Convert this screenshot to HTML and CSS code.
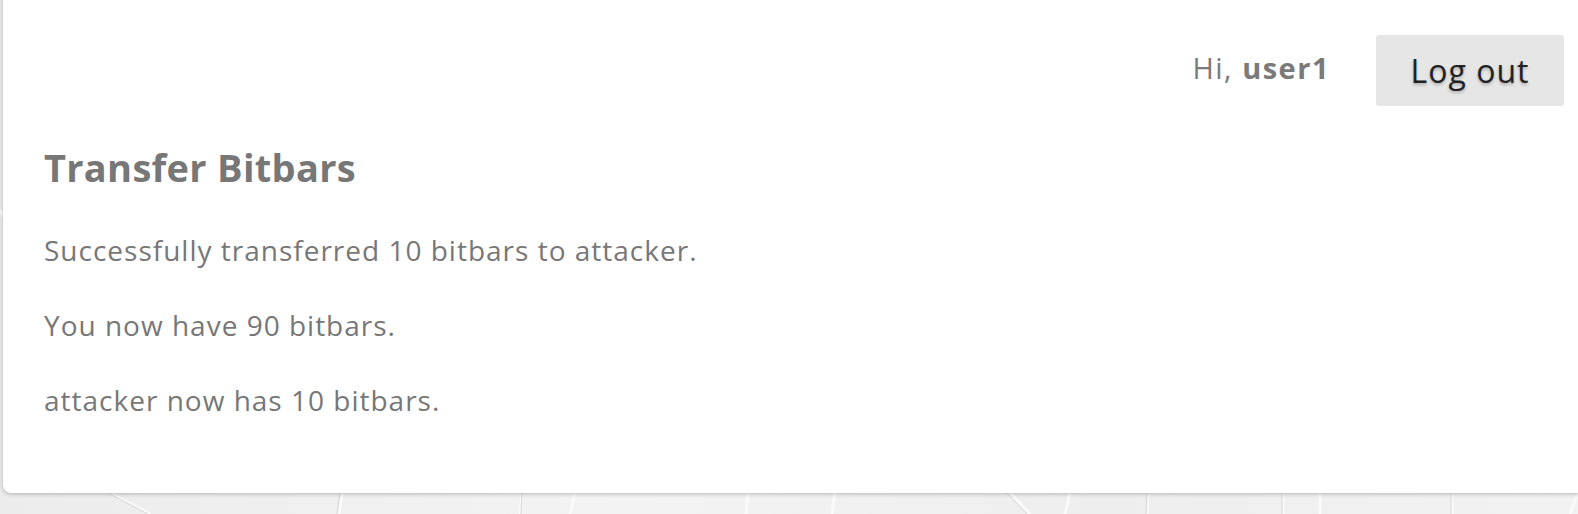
FILE: index.html
```html
<!DOCTYPE html>
<html lang="en">
<head>
    <meta charset="UTF-8">
    <meta name="viewport" content="width=device-width, initial-scale=1.0">
    <title>Transfer Bitbars</title>
    <link rel="stylesheet" href="styles.css">
</head>
<body>
    <div class="backdrop">
        <svg class="lines" width="1578" height="514" viewBox="0 0 1578 514">
            <g stroke="#fafafa" stroke-width="3" fill="none">
                <line x1="0" y1="210" x2="10" y2="230"/>
                <line x1="110" y1="493" x2="150" y2="514"/>
                <line x1="342" y1="493" x2="339" y2="514"/>
                <line x1="522" y1="493" x2="520" y2="514"/>
                <line x1="575" y1="493" x2="570" y2="514"/>
                <line x1="748" y1="493" x2="746" y2="514"/>
                <line x1="835" y1="493" x2="832" y2="514"/>
                <line x1="1010" y1="493" x2="1030" y2="514"/>
                <line x1="1070" y1="493" x2="1065" y2="514"/>
                <line x1="1148" y1="493" x2="1147" y2="514"/>
                <line x1="1283" y1="493" x2="1283" y2="514"/>
                <line x1="1320" y1="493" x2="1320" y2="514"/>
                <line x1="1452" y1="493" x2="1452" y2="514"/>
                <line x1="1578" y1="493" x2="1570" y2="514"/>
            </g>
            <g stroke="#d4d4d4" stroke-width="1" fill="none">
                <line x1="108" y1="493" x2="148" y2="514"/>
                <line x1="340" y1="493" x2="337" y2="514"/>
                <line x1="522" y1="493" x2="521" y2="514"/>
                <line x1="1007" y1="493" x2="1027" y2="514"/>
                <line x1="1147" y1="493" x2="1146" y2="514"/>
                <line x1="1282" y1="493" x2="1282" y2="514"/>
                <line x1="1451" y1="493" x2="1451" y2="514"/>
            </g>
        </svg>
    </div>

    <div class="card">
        <header class="topbar">
            <span class="greeting">Hi, <b>user1</b></span>
            <button class="logout">Log out</button>
        </header>

        <main class="content">
            <h1 class="title">Transfer Bitbars</h1>
            <p class="message">Successfully transferred 10 bitbars to attacker.</p>
            <p class="message">You now have 90 bitbars.</p>
            <p class="message">attacker now has 10 bitbars.</p>
        </main>
    </div>
</body>
</html>
```

FILE: styles.css
```css
body {
    margin: 0;
    height: 514px;
    overflow: hidden;
    font-family: "Open Sans", Arial, sans-serif;
    color: #777;
    background: linear-gradient(90deg, #ececec, #f3f3f3 40%, #eeeeee 70%, #f2f2f2);
    position: relative;
}
.backdrop {
    position: absolute;
    inset: 0;
}
.lines {
    display: block;
}
.card {
    position: relative;
    box-sizing: border-box;
    margin: -20px -20px 0 3px;
    padding-top: 20px;
    height: 513px;
    background: #fff;
    border-radius: 8px;
    box-shadow: 0 1px 4px rgba(0, 0, 0, 0.25);
}
.topbar {
    display: flex;
    justify-content: flex-end;
    align-items: center;
    gap: 46px;
    padding: 35px 34px 0 0;
}
.greeting {
    padding-bottom: 7px;
    font-size: 29px;
    letter-spacing: 1.5px;
    color: #7a7a7a;
}
.greeting b {
    font-weight: 700;
}
.logout {
    width: 188px;
    height: 71px;
    border: none;
    border-radius: 3px;
    background-color: #e6e6e6;
    color: #222;
    font-family: inherit;
    font-size: 32px;
    letter-spacing: 1px;
    text-shadow: 0 2px 3px rgba(0, 0, 0, 0.25);
    cursor: pointer;
}
.content {
    padding: 0 41px;
}
.title {
    margin: 35px 0 0;
    font-size: 38px;
    letter-spacing: 0.3px;
    font-weight: 700;
    color: #777;
}
.message {
    margin: 0;
    padding-top: 40px;
    font-size: 28px;
    letter-spacing: 1px;
    line-height: 35px;
}
```
